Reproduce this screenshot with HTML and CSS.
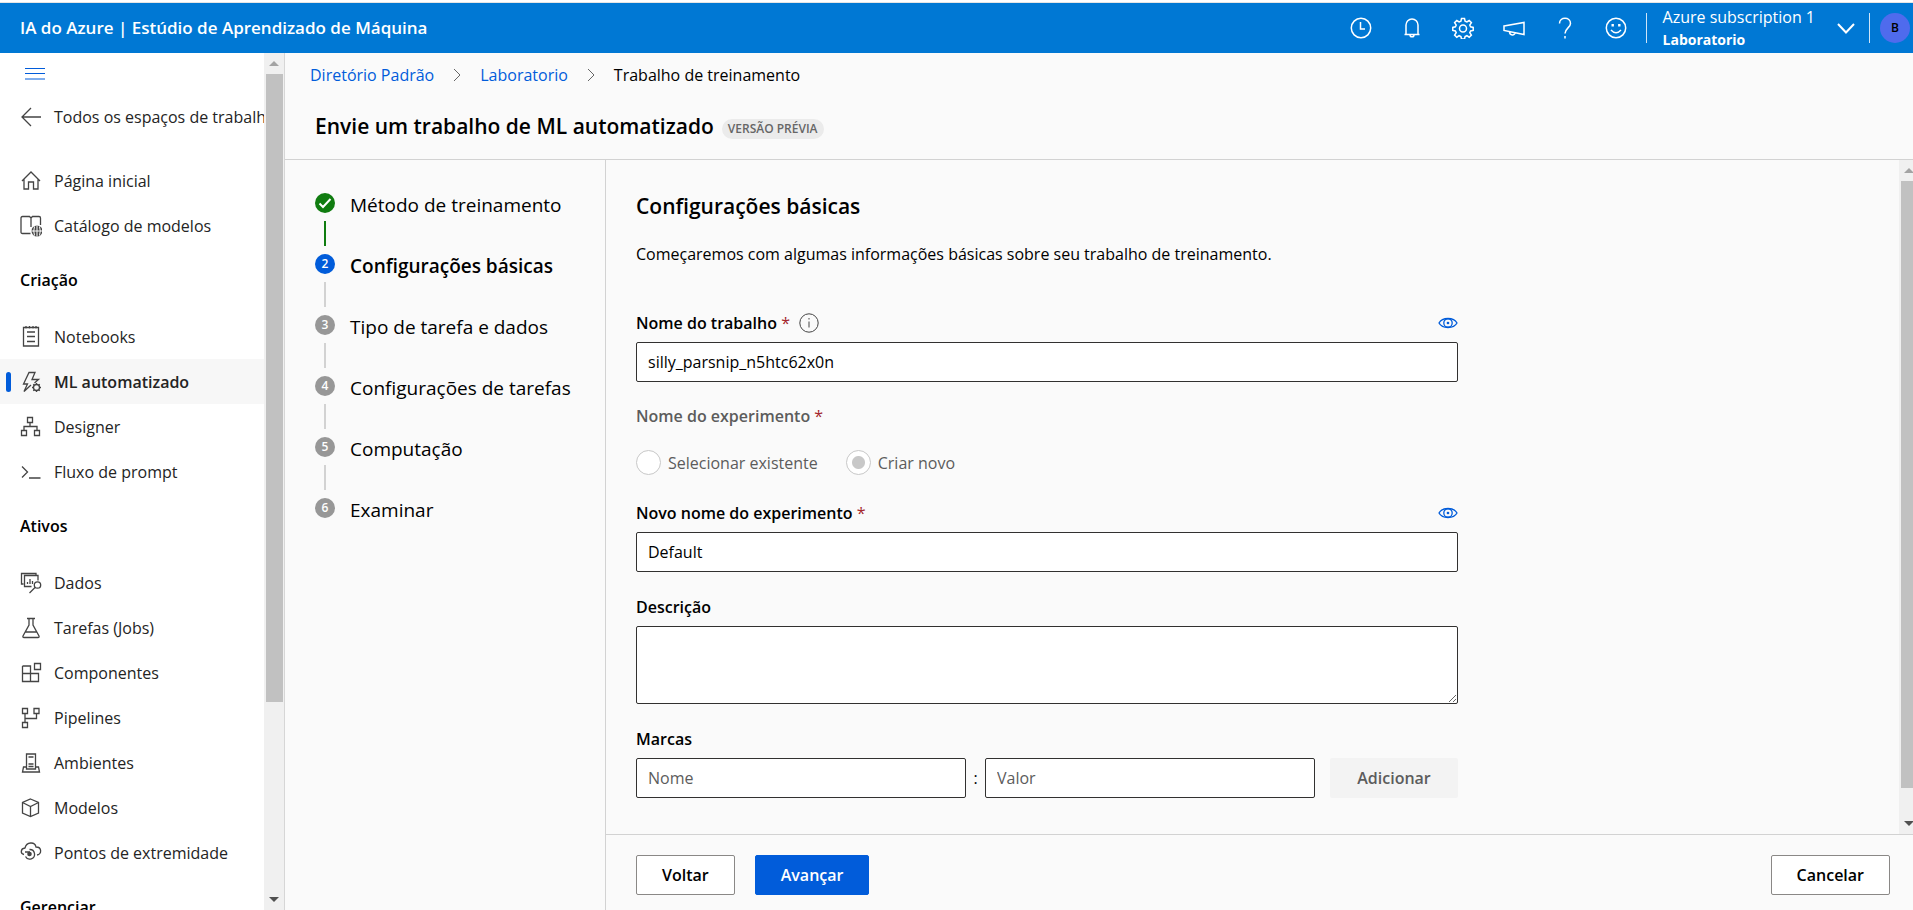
FILE: index.html
```html
<!DOCTYPE html>
<html lang="pt-BR">
<head>
<meta charset="utf-8">
<title>Estúdio de Aprendizado de Máquina</title>
<link rel="stylesheet" href="styles.css">
</head>
<body>
<svg class="sprite" aria-hidden="true">
  <symbol id="up" viewBox="0 0 10 5"><path d="M0 5 5 0l5 5z" fill="currentColor"/></symbol>
  <symbol id="down" viewBox="0 0 10 5"><path d="M0 0 5 5l5-5z" fill="currentColor"/></symbol>
  <symbol id="eye" viewBox="0 0 20 12"><path d="M1 6q2.500-4.500 9-4.500T19 6q-2.500 4.500-9 4.500T1 6z"/><circle cx="10" cy="6" r="4.200"/><circle cx="10" cy="6" r=".7" fill="currentColor"/></symbol>
  <symbol id="chev" viewBox="0 0 8 14"><path d="m1 1 6 6-6 6"/></symbol>
</svg>
<header class="topbar">
  <h1 class="brand">IA do Azure | Estúdio de Aprendizado de Máquina</h1>
  <div class="tools">
    <button class="tool" aria-label="Recentes"><svg viewBox="0 0 22 22"><circle cx="11" cy="11" r="9.700"/><path d="M10.500 5v7h4.500"/></svg></button>
    <button class="tool" aria-label="Notificações"><svg viewBox="0 0 22 22"><path d="M3.500 17.500h15M5 17.500V8a6 6 0 0 1 12 0v9.500M9 18a2 1.800 0 0 0 4 0"/></svg></button>
    <button class="tool" aria-label="Configurações"><svg viewBox="0 0 22 22"><path d="M9.500 1.500h3l.6 2.700 1.800.8 2.300-1.500 2.200 2.200-1.600 2.300.8 1.800 2.600.6v3l-2.600.6-.8 1.700 1.600 2.400-2.200 2.100-2.300-1.500-1.800.8-.6 2.500h-3l-.6-2.500-1.800-.8-2.300 1.500-2.200-2.100 1.600-2.400-.8-1.700-2.600-.6v-3l2.600-.6.8-1.800L2.600 5.700l2.200-2.200L7.100 5l1.800-.8z"/><circle cx="11" cy="11.500" r="3.500"/></svg></button>
    <button class="tool" aria-label="Novidades"><svg viewBox="0 0 22 22"><path d="M1 9 21 5.500v12L1 13.500zM6.500 14.800c0 4 5.500 4 5.500 1"/></svg></button>
    <button class="tool" aria-label="Ajuda"><svg viewBox="0 0 22 22"><path d="M5.500 6.500c0-7 11-7 11 0 0 4-5.500 5-5.500 10M11 19v2.500"/></svg></button>
    <button class="tool" aria-label="Comentários"><svg viewBox="0 0 22 22"><circle cx="11" cy="11" r="9.700"/><path d="M6 13q5 5.500 10 0"/><path class="fill" d="M6.500 7h2.400v2.400H6.500zM13.100 7h2.400v2.400h-2.400z"/></svg></button>
  </div>
  <button class="account">
    <span class="account-text"><span>Azure subscription 1</span><strong>Laboratorio</strong></span>
    <svg viewBox="0 0 18 11"><path d="m1 1 8 8.500L17 1"/></svg>
  </button>
  <button class="avatar" aria-label="Conta">B</button>
</header>
<div class="shell">
  <nav class="side">
    <div class="side-list">
      <button class="burger" aria-label="Menu"><svg viewBox="0 0 20 12"><path d="M0 .5h20M0 5.500h20M0 11h20"/></svg></button>
      <a class="item back" href="#"><svg viewBox="0 0 22 22"><path d="M11 2 2 11l9 9M2 11h19"/></svg>Todos os espaços de trabalho</a>
      <a class="item" href="#"><svg viewBox="0 0 22 22"><path d="m2 11 9-9 9 9M4 9.500V19h4.500v-7h5v7H18V9.500"/></svg>Página inicial</a>
      <a class="item" href="#"><svg viewBox="0 0 22 22"><path d="M10.500 18.500H2.500q-1.500 0-1.500-1.500V3q0-1.500 1.500-1.500h7l1.500 1.500v9M11 3l1.500-1.500h6.500q1.500 0 1.500 1.500v7"/><circle class="fill" cx="17" cy="16" r="5.500"/><path class="cut" d="M17 10.500v11M11.500 16h11M14.500 11.500q-1.500 4.500 0 9M19.500 11.500q1.500 4.500 0 9"/></svg>Catálogo de modelos</a>
      <h2 class="group">Criação</h2>
      <a class="item" href="#"><svg viewBox="0 0 22 22"><path d="M3.500 1.500h15v18.500h-15zM6 0v2.500M9.500 0v2.500M13 0v2.500M16 0v2.500M7 6h8M7 10.500h8M7 15.500h8"/></svg>Notebooks</a>
      <a class="item active" href="#"><svg viewBox="0 0 22 22"><path d="M11 14 4 20.500l3.500-7.500H3.500L9 1.500h6L12 8.500h6.500L14.500 12"/><circle cx="16.500" cy="16.500" r="3"/><path d="M16.500 12v1.500M16.500 19.500v1.500M12 16.500h1.500M19.500 16.500h1.500M13.300 13.300l1 1M18.700 18.700l1 1M19.700 13.300l-1 1M13.300 19.700l1-1"/></svg>ML automatizado</a>
      <a class="item" href="#"><svg viewBox="0 0 22 22"><path d="M7.500 1.500h5v5h-5zM1.500 14.500h5v5h-5zM14.500 14.500h5v5h-5zM10 6.500v4M4 14.500v-4h13v4"/></svg>Designer</a>
      <a class="item" href="#"><svg viewBox="0 0 22 22"><path d="m2 5.500 5.500 5.500L2 16.500M9 17h11.500"/></svg>Fluxo de prompt</a>
      <h2 class="group">Ativos</h2>
      <a class="item" href="#"><svg viewBox="0 0 22 22"><path d="M3.500 12H1.500V1.500h14.500v2M11.500 14.500H4.500v-11h13.500v5M7.500 12v-2M10 12V7M12.500 12V9"/><circle cx="17.500" cy="13" r="3.200"/><path d="M15 15.500 9.500 21"/></svg>Dados</a>
      <a class="item" href="#"><svg viewBox="0 0 22 22"><path d="M7 1.500h8M9 1.500v6.500L3 19q-.5 1.500 1 1.500h14q1.500 0 1-1.500L13 8V1.500M5.500 15h11"/></svg>Tarefas (Jobs)</a>
      <a class="item" href="#"><svg viewBox="0 0 22 22"><path d="M2.500 11.500h16v8h-16zM2.500 4h8v15.500M2.500 4v8M14.500 1.500h6v6h-6z"/></svg>Componentes</a>
      <a class="item" href="#"><svg viewBox="0 0 22 22"><path d="M2.500 1.500h5v5h-5zM14 1.500h5v5h-5zM2.500 15.500h5v5h-5zM5 6.500v9M5 11.500h11.500v-5"/></svg>Pipelines</a>
      <a class="item" href="#"><svg viewBox="0 0 22 22"><path d="M6.500 17V2h9v15zM6.500 15H3.500L2.500 20h17l-1-5h-3M8.500 5h5M8.500 12h5M8.500 14.500h5"/></svg>Ambientes</a>
      <a class="item" href="#"><svg viewBox="0 0 22 22"><path d="m10.500 2 8 3.500v10.500l-8 3.500-8-3.500V5.500zM2.500 5.500l8 4 8-4M10.500 9.500v10"/></svg>Modelos</a>
      <a class="item" href="#"><svg viewBox="0 0 22 22"><path d="M4 12.500C0 11.500 .5 6.500 5 6 6.500-.5 15-.5 16 5c6 0 6 7 1 8"/><path d="M5 10h5M9.500 7.500a4.800 4.800 0 1 1-4 7"/><circle class="fill" cx="9.500" cy="12" r="2.300"/></svg>Pontos de extremidade</a>
      <h2 class="group">Gerenciar</h2>
    </div>
    <div class="scroll side-scroll" aria-hidden="true"><svg class="off"><use href="#up"/></svg><span class="track"><span class="thumb"></span></span><svg><use href="#down"/></svg></div>
  </nav>
  <main class="main">
    <nav class="crumbs"><a href="#">Diretório Padrão</a><svg><use href="#chev"/></svg><a href="#">Laboratorio</a><svg><use href="#chev"/></svg><span>Trabalho de treinamento</span></nav>
    <div class="title"><h2>Envie um trabalho de ML automatizado</h2><span class="pill">VERSÃO PRÉVIA</span></div>
    <div class="wizard">
      <ol class="steps">
        <li class="done"><span class="dot"><svg viewBox="0 0 20 20"><path d="m4.500 10.500 3.500 3.500 7.500-8"/></svg></span>Método de treinamento</li>
        <li class="current"><span class="dot">2</span>Configurações básicas</li>
        <li><span class="dot">3</span>Tipo de tarefa e dados</li>
        <li><span class="dot">4</span>Configurações de tarefas</li>
        <li><span class="dot">5</span>Computação</li>
        <li><span class="dot">6</span>Examinar</li>
      </ol>
      <div class="panel">
        <div class="body">
          <form class="form" id="job">
            <h3>Configurações básicas</h3>
            <p class="intro">Começaremos com algumas informações básicas sobre seu trabalho de treinamento.</p>
            <div class="field">
              <div class="label-row"><label for="name">Nome do trabalho <span class="req">*</span></label><svg class="info" viewBox="0 0 20 20"><circle cx="10" cy="10" r="9.200"/><path d="M10 8.500v6M10 5v1.500"/></svg><svg class="eye"><use href="#eye"/></svg></div>
              <input id="name" type="text" value="silly_parsnip_n5htc62x0n">
            </div>
            <fieldset class="field choice" disabled>
              <legend>Nome do experimento <span class="req">*</span></legend>
              <div class="radios">
                <label><input type="radio" name="exp">Selecionar existente</label>
                <label><input type="radio" name="exp" checked>Criar novo</label>
              </div>
            </fieldset>
            <div class="field">
              <div class="label-row"><label for="exp-name">Novo nome do experimento <span class="req">*</span></label><svg class="eye"><use href="#eye"/></svg></div>
              <input id="exp-name" type="text" value="Default">
            </div>
            <div class="field">
              <div class="label-row"><label for="desc">Descrição</label></div>
              <textarea id="desc"></textarea>
            </div>
            <div class="field">
              <div class="label-row"><label for="tag">Marcas</label></div>
              <div class="tags"><input id="tag" type="text" placeholder="Nome"><span class="colon">:</span><input type="text" aria-label="Valor" placeholder="Valor"><button class="btn add" type="button" disabled>Adicionar</button></div>
            </div>
          </form>
          <div class="scroll body-scroll" aria-hidden="true"><svg class="off"><use href="#up"/></svg><span class="track"><span class="thumb"></span></span><svg><use href="#down"/></svg></div>
        </div>
        <footer class="actions"><button class="btn" type="button">Voltar</button><button class="btn primary" type="submit" form="job">Avançar</button><button class="btn cancel" type="button">Cancelar</button></footer>
      </div>
    </div>
  </main>
</div>
</body>
</html>
```
FILE: styles.css
```css
* { box-sizing: border-box; }
body {
  margin: 0;
  height: 100vh;
  display: flex;
  flex-direction: column;
  overflow: hidden;
  border-top: 2px solid #fff;
  background: #fafafa;
  color: #000;
  font: 16px/24px "Open Sans", "Noto Sans", sans-serif;
}
h1, h2, h3, p, ol { margin: 0; padding: 0; }
button, input, textarea { font: inherit; color: inherit; }
a { color: inherit; text-decoration: none; }
svg { fill: none; stroke: currentColor; flex: none; }
.fill { fill: currentColor; stroke: none; }
.sprite { position: absolute; width: 0; height: 0; }

/* Top bar */
.topbar {
  flex: none;
  height: 51px;
  display: flex;
  align-items: center;
  padding: 0 3px 0 20px;
  border-top: 1px solid #e5e5e5;
  background: #0078d4;
  color: #fff;
}
.topbar button { border: 0; background: none; padding: 0; }
.brand { flex: 1; font-size: 17px; font-weight: 600; }
.tools { display: flex; gap: 7px; margin-right: 8px; }
.tool { width: 44px; height: 50px; display: grid; place-items: center; }
.tool svg { width: 22px; height: 22px; stroke-width: 1.5; }
.topbar .account {
  height: 30px;
  display: flex;
  align-items: center;
  gap: 22px;
  padding: 0 14px 0 16px;
  border: solid #cfe4f7;
  border-width: 0 1px;
  text-align: left;
}
.account-text { display: flex; flex-direction: column; }
.account-text strong { font-size: 14px; font-weight: 700; line-height: 22px; }
.account svg { width: 18px; height: 11px; stroke-width: 2; }
.topbar .avatar {
  width: 30px;
  height: 30px;
  margin-left: 10px;
  border-radius: 50%;
  background: #4f6bed;
  color: #000;
  font-size: 12px;
  font-weight: 600;
}

/* Sidebar */
.shell { flex: 1; min-height: 0; display: flex; }
.side {
  width: 285px;
  flex: none;
  display: flex;
  background: #fff;
  border-right: 1px solid #d6d6d6;
}
.side-list { flex: 1; min-width: 0; overflow: hidden; }
.burger {
  display: block;
  height: 41px;
  margin: 0 0 0 25px;
  padding: 0;
  border: 0;
  background: none;
  color: #015cda;
}
.burger svg { display: block; width: 20px; height: 12px; }
.item {
  height: 45px;
  display: flex;
  align-items: center;
  gap: 12px;
  padding-left: 20px;
  white-space: nowrap;
  color: #242424;
}
.item svg { width: 22px; height: 22px; color: #444; stroke-width: 1.3; }
.item .cut { stroke: #fff; stroke-width: 1; }
.back { margin-bottom: 19px; }
.active { position: relative; background: #f7f7f7; font-weight: 600; }
.active::before {
  content: "";
  position: absolute;
  left: 6px;
  width: 5px;
  height: 20px;
  border-radius: 3px;
  background: #015cda;
}
.group {
  height: 66px;
  padding: 20px 0 0 20px;
  font-size: 16px;
  font-weight: 600;
}

/* Scroll bars */
.scroll {
  flex: none;
  width: 20px;
  display: flex;
  flex-direction: column;
  align-items: center;
  background: #f0f0f0;
}
.scroll > svg { width: 10px; height: 5px; margin: 8px 0; stroke: none; color: #505050; }
.scroll > .off { color: #a3a3a3; }
.track { flex: 1; align-self: stretch; padding: 0 1px 0 2px; }
.thumb { display: block; background: #c1c1c1; }
.side-scroll .thumb { height: 77%; }
.body-scroll { margin-right: -6px; }
.body-scroll .thumb { height: 96%; }

/* Page heading */
.main { flex: 1; min-width: 0; display: flex; flex-direction: column; }
.crumbs {
  display: flex;
  align-items: center;
  gap: 19px;
  padding: 10px 25px 0;
}
.crumbs a { color: #015cda; }
.crumbs svg { width: 8px; height: 14px; color: #666; }
.title {
  display: flex;
  align-items: center;
  gap: 8px;
  height: 72px;
  padding: 6px 30px 0;
}
.title h2 { font-size: 21px; font-weight: 600; }
.pill {
  margin-top: 6px;
  padding: 0 6px;
  border-radius: 10px;
  background: #ebebeb;
  color: #666;
  font-size: 12px;
  line-height: 20px;
  font-weight: 600;
}

/* Wizard */
.wizard {
  flex: 1;
  min-height: 0;
  display: flex;
  border-top: 1px solid #d2d2d2;
}
.steps {
  flex: none;
  width: 321px;
  padding: 33px 0 0 30px;
  border-right: 1px solid #d2d2d2;
  list-style: none;
  font-size: 19px;
}
.steps li {
  position: relative;
  display: flex;
  align-items: flex-start;
  gap: 15px;
  height: 24px;
  margin-bottom: 37px;
}
.steps li:not(:last-child)::after {
  content: "";
  position: absolute;
  left: 9px;
  top: 28px;
  width: 2px;
  height: 25px;
  background: #d2d2d2;
}
.steps li.done:not(:last-child)::after { background: #107c10; }
.current { font-weight: 600; }
.dot {
  width: 20px;
  height: 20px;
  border-radius: 50%;
  background: #979797;
  color: #fff;
  font-size: 12px;
  line-height: 20px;
  font-weight: 600;
  text-align: center;
}
.done .dot { background: #107c10; }
.current .dot { background: #015cda; }
.dot svg { display: block; width: 20px; height: 20px; stroke-width: 2; }

.panel { flex: 1; min-width: 0; display: flex; flex-direction: column; }
.body { flex: 1; min-height: 0; display: flex; justify-content: space-between; overflow: hidden; }
.form { flex: 1; max-width: 852px; padding: 34px 0 0 30px; }
.form h3 { font-size: 21px; font-weight: 600; }
.intro { margin: 24px 0 44px; }
.field { margin: 0 0 22px; padding: 0; border: 0; }
.label-row { height: 32px; display: flex; align-items: center; gap: 9px; padding-bottom: 6px; }
.label-row label, legend { font-size: 16px; font-weight: 600; }
.req { color: #a4262c; font-weight: 400; }
.info { width: 20px; height: 20px; color: #444; }
.eye { width: 20px; height: 12px; margin-left: auto; color: #015cda; stroke-width: 1.3; }
.form input[type="text"], textarea {
  display: block;
  width: 100%;
  height: 40px;
  padding: 0 11px;
  border: 1px solid #323130;
  border-radius: 2px;
  background: #fff;
  font-size: 16px;
}
.form textarea { height: 78px; }
.form ::placeholder { color: #5c5c5c; opacity: 1; }
.field.choice { margin-bottom: 25px; color: #5c5c5c; }
legend { padding: 0; }
.radios { display: flex; gap: 28px; margin-top: 22px; }
.radios label { display: flex; align-items: center; gap: 7px; font-size: 16px; }
.radios input {
  appearance: none;
  width: 25px;
  height: 25px;
  margin: 0;
  border: 1px solid #c8c8c8;
  border-radius: 50%;
  background: #fff;
}
.radios input:checked { background: radial-gradient(#c8c8c8 6px, #fff 7px); }
.tags { display: flex; }
.form .tags input { flex: 1; width: 0; }
.colon { width: 19px; line-height: 40px; text-align: center; }
.btn {
  height: 40px;
  padding: 0 25px;
  border: 1px solid #8a8886;
  border-radius: 2px;
  background: #fff;
  font-size: 16px;
  font-weight: 600;
}
.add { width: 128px; margin-left: 15px; border: 0; background: #f3f3f3; color: #5c5c5c; }
.actions {
  flex: none;
  display: flex;
  gap: 20px;
  height: 76px;
  padding: 20px 23px 0 30px;
  border-top: 1px solid #d2d2d2;
}
.primary { border-color: #015cda; background: #015cda; color: #fff; }
.cancel { margin-left: auto; }
```
